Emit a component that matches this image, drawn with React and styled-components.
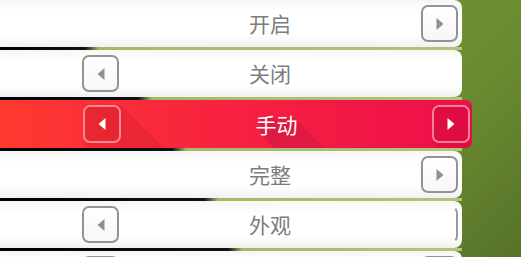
import React from "react";
import styled, { createGlobalStyle, css } from "styled-components";

const GlobalStyle = createGlobalStyle`
  html, body { margin: 0; padding: 0; }
  body {
    width: 521px;
    height: 257px;
    overflow: hidden;
    font-family: "Noto Sans CJK SC", "Noto Sans", sans-serif;
    background: linear-gradient(135deg, #86a446 0%, #729335 45%, #6b8b30 72%, #56732a 100%);
  }
`;

const Page = styled.div`
  width: 521px;
  height: 257px;
  overflow: hidden;
`;

const Menu = styled.div`
  display: flex;
  flex-direction: column;
  width: 472px;
`;

const Divider = styled.div`
  width: 462px;
  height: 3px;
  flex: none;
  background: linear-gradient(
    to right,
    #000 0,
    #111 ${(p) => p.$len}px,
    #a3ba68 ${(p) => p.$len + 14}px,
    #b2c47a 100%
  );
`;

const Row = styled.div`
  position: relative;
  isolation: isolate;
  overflow: hidden;
  flex: none;
  display: flex;
  align-items: center;
  box-sizing: border-box;
  width: ${(p) => (p.$active ? 472 : 462)}px;
  height: ${(p) => (p.$active ? 48 : 47)}px;
  padding: 0 ${(p) => (p.$active ? 2 : 4)}px 0 ${(p) => (p.$active ? 83 : 82)}px;
  border-radius: 0 ${(p) => (p.$active ? 6 : 8)}px ${(p) => (p.$active ? 6 : 8)}px 0;
  ${(p) =>
    p.$active
      ? css`
          background: linear-gradient(to right, #ff3a30 0%, #f7233f 45%, #ee0f4b 100%);
        `
      : css`
          background: linear-gradient(#f6f6f6 0%, #ffffff 25%, #ffffff 75%, #f1f1f1 100%);
        `}
`;

const Label = styled.div`
  flex: 1;
  text-align: center;
  font-size: 21px;
  line-height: 1;
  color: ${(p) => (p.$active ? "#ffffff" : "#7d7d7d")};
  ${(p) =>
    p.$active &&
    css`
      text-shadow: ${Array.from({ length: 30 }, (_, i) => `${i + 1}px ${i + 1}px 0 #e01943`).join(", ")};
    `}
`;

const Slot = styled.div`
  width: ${(p) => (p.$active ? 38 : 37)}px;
  height: ${(p) => (p.$active ? 38 : 37)}px;
  flex: none;
`;

const ArrowButton = styled.div`
  position: relative;
  box-sizing: border-box;
  width: ${(p) => (p.$active ? 38 : 37)}px;
  height: ${(p) => (p.$active ? 38 : 37)}px;
  flex: none;
  display: flex;
  align-items: center;
  justify-content: center;
  border-radius: 7px;
  ${(p) =>
    p.$active
      ? css`
          border: 2px solid rgba(255, 170, 180, 0.75);
          background: rgba(120, 0, 20, 0.04);
          &::before {
            content: "";
            position: absolute;
            left: -2px;
            top: -2px;
            width: 98px;
            height: 98px;
            background: rgba(150, 0, 30, 0.13);
            clip-path: polygon(0 0, 38px 0, 98px 60px, 98px 98px, 60px 98px, 0 38px);
            z-index: -1;
          }
        `
      : p.$ghost
      ? css`
          border: 2px solid transparent;
          border-right-color: #9a9a9a;
          background: transparent;
        `
      : css`
          border: 2px solid #939393;
          background: linear-gradient(#ffffff, #f7f7f7);
        `}
`;

const Arrow = ({ dir, color }) => (
  <svg width="10" height="14" viewBox="0 0 10 14">
    {dir === "left" ? (
      <polygon points="8.5,1 8.5,13 1.5,7" fill={color} />
    ) : (
      <polygon points="1.5,1 1.5,13 8.5,7" fill={color} />
    )}
  </svg>
);

const items = [
  { label: "开启", left: false, right: true },
  { label: "关闭", left: true, right: false },
  { label: "手动", left: true, right: true, active: true },
  { label: "完整", left: false, right: true },
  { label: "外观", left: true, right: "ghost" },
  { label: "", left: true, right: true },
];

const dividers = [85, 138, 172, 204, 228];

function MenuRow({ item }) {
  const color = item.active ? "#ffffff" : "#8f8f8f";
  return (
    <Row $active={item.active}>
      {item.left ? (
        <ArrowButton $active={item.active}>
          <Arrow dir="left" color={color} />
        </ArrowButton>
      ) : (
        <Slot $active={item.active} />
      )}
      <Label $active={item.active}>{item.label}</Label>
      {item.right === "ghost" ? (
        <ArrowButton $ghost />
      ) : item.right ? (
        <ArrowButton $active={item.active}>
          <Arrow dir="right" color={color} />
        </ArrowButton>
      ) : (
        <Slot $active={item.active} />
      )}
    </Row>
  );
}

export default function App() {
  return (
    <Page>
      <GlobalStyle />
      <Menu>
        {items.map((item, i) => (
          <React.Fragment key={i}>
            <MenuRow item={item} />
            {i < dividers.length && <Divider $len={dividers[i]} />}
          </React.Fragment>
        ))}
      </Menu>
    </Page>
  );
}
